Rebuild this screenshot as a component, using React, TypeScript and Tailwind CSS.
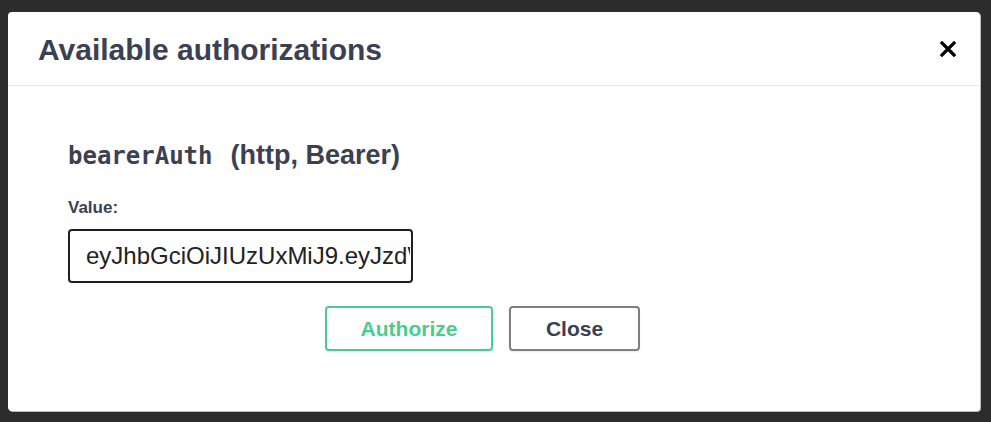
import React from "react";

function CloseIcon() {
  return (
    <svg width="16" height="16" viewBox="0 0 16 16" fill="none">
      <path d="M2 2L14 14M14 2L2 14" stroke="#000" strokeWidth="3.2" strokeLinecap="square" />
    </svg>
  );
}

export default function App() {
  return (
    <div className="w-[991px] h-[422px] bg-[#2c2c2d] pt-[12px] pl-[8px] overflow-hidden font-['Liberation_Sans',Arial,sans-serif]">
      <div className="w-[972px] h-[399px] bg-white rounded-[4px] shadow-[1px_1px_0_#bdbdbd] flex flex-col">
        {/* Header */}
        <div className="h-[74px] flex items-center justify-between pl-[30px] pr-[22px] border-b border-[#ebebeb]">
          <h3 className="text-[30px] font-bold text-[#3b4151] leading-none pt-[2px]">
            Available authorizations
          </h3>
          <button className="w-[20px] h-[20px] flex items-center justify-center">
            <CloseIcon />
          </button>
        </div>

        {/* Body */}
        <div className="pl-[60px] pt-[56px]">
          <h4 className="flex items-baseline gap-[18px] text-[#3b4151] leading-none">
            <code className="font-['DejaVu_Sans_Mono',monospace] text-[24px] font-bold">bearerAuth</code>
            <span className="text-[27px] font-bold">(http, Bearer)</span>
          </h4>

          <label className="block mt-[30px] text-[17px] font-bold text-[#3b4151] leading-none">Value:</label>
          <input
            readOnly
            value="eyJhbGciOiJIUzUxMiJ9.eyJzdWIiOiJ1c2VyIn0"
            className="block mt-[13px] w-[345px] h-[54px] border-2 border-[#1f1f1f] rounded-[4px] pl-[16px] pr-[1px] text-[24px] text-[#222] outline-none"
          />

          <div className="mt-[23px] flex gap-[16px] pl-[257px]">
            <button className="w-[168px] h-[45px] border-2 border-[#49cc90] rounded-[4px] text-[21px] font-bold text-[#49cc90] shadow-[0_1px_2px_rgba(0,0,0,0.1)]">
              Authorize
            </button>
            <button className="w-[131px] h-[45px] border-2 border-[#7f7f7f] rounded-[4px] text-[21px] font-bold text-[#3b4151] shadow-[0_1px_2px_rgba(0,0,0,0.1)]">
              Close
            </button>
          </div>
        </div>
      </div>
    </div>
  );
}
